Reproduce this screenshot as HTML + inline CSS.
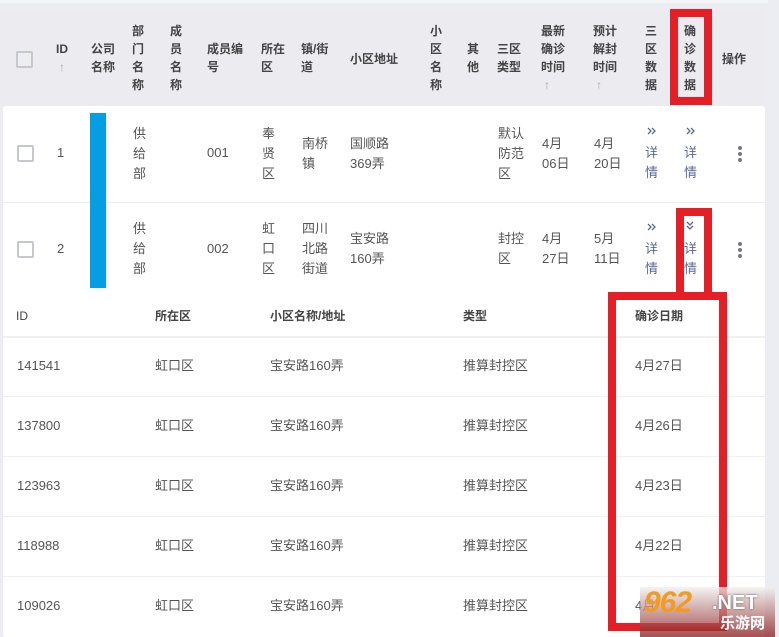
<!DOCTYPE html>
<html><head><meta charset="utf-8"><style>
*{margin:0;padding:0;box-sizing:border-box}
body{width:779px;height:637px;overflow:hidden;background:#ecedf2;font-family:"Liberation Sans","Noto Sans CJK SC",sans-serif;position:relative;color:#555}
.a{position:absolute}
.h{position:absolute;font-size:12px;font-weight:bold;color:#444;line-height:18px}
.t{position:absolute;font-size:13px;color:#555;line-height:20px}
.l{position:absolute;font-size:13px;color:#5b6795;line-height:20px;text-align:center}
.cb{position:absolute;width:17px;height:17px;border:2px solid #c5c8cf;border-radius:2px;background:#fff}
.s{position:absolute;font-size:13px;color:#555;line-height:18px}
.sh{position:absolute;font-size:12px;font-weight:bold;color:#444;line-height:18px}
.dots{position:absolute;width:4px}
.dots i{display:block;width:4px;height:4px;border-radius:2px;background:#778;margin-bottom:2px}
</style></head><body>
<div class="a" style="left:0;top:0;width:768px;height:3px;background:#f5f5f8"></div>
<div class="a" style="left:0;top:10px;width:766px;height:96px;background:#ebebf0"></div>
<div class="a" style="left:3px;top:106px;width:762px;height:531px;background:#fff;border-radius:3px"></div>
<div class="a" style="left:3px;top:202px;width:762px;height:1px;background:#eceef2"></div>
<div class="a" style="left:3px;top:336px;width:762px;height:2px;background:#eef0f4"></div>
<div class="a" style="left:3px;top:396px;width:762px;height:1px;background:#eef0f4"></div>
<div class="a" style="left:3px;top:456px;width:762px;height:1px;background:#eef0f4"></div>
<div class="a" style="left:3px;top:516px;width:762px;height:1px;background:#eef0f4"></div>
<div class="a" style="left:3px;top:576px;width:762px;height:1px;background:#eef0f4"></div>

<!-- header -->
<div class="cb" style="left:16px;top:51px;background:#eeeef2"></div>
<div class="h" style="left:56px;top:40px">ID<br><span style="color:#aaa;font-weight:normal;margin-left:3px">↑</span></div>
<div class="h" style="left:91px;top:40px">公司<br>名称</div>
<div class="h" style="left:132px;top:22px">部<br>门<br>名<br>称</div>
<div class="h" style="left:170px;top:22px">成<br>员<br>名<br>称</div>
<div class="h" style="left:207px;top:40px">成员编<br>号</div>
<div class="h" style="left:261px;top:40px">所在<br>区</div>
<div class="h" style="left:301px;top:40px">镇/街<br>道</div>
<div class="h" style="left:350px;top:50px">小区地址</div>
<div class="h" style="left:430px;top:22px">小<br>区<br>名<br>称</div>
<div class="h" style="left:467px;top:40px">其<br>他</div>
<div class="h" style="left:497px;top:40px">三区<br>类型</div>
<div class="h" style="left:541px;top:22px">最新<br>确诊<br>时间<br><span style="color:#aaa;font-weight:normal;margin-left:3px">↑</span></div>
<div class="h" style="left:593px;top:22px">预计<br>解封<br>时间<br><span style="color:#aaa;font-weight:normal;margin-left:3px">↑</span></div>
<div class="h" style="left:645px;top:22px">三<br>区<br>数<br>据</div>
<div class="h" style="left:684px;top:22px">确<br>诊<br>数<br>据</div>
<div class="h" style="left:722px;top:50px">操作</div>

<div class="a" style="left:90px;top:113px;width:16px;height:175px;background:#049fe3"></div>

<!-- row1 -->
<div class="cb" style="left:17px;top:145px"></div>
<div class="t" style="left:57px;top:143px">1</div>
<div class="t" style="left:133px;top:124px">供<br>给<br>部</div>
<div class="t" style="left:207px;top:143px">001</div>
<div class="t" style="left:262px;top:124px">奉<br>贤<br>区</div>
<div class="t" style="left:302px;top:134px">南桥<br>镇</div>
<div class="t" style="left:350px;top:134px">国顺路<br>369弄</div>
<div class="t" style="left:498px;top:124px">默认<br>防范<br>区</div>
<div class="t" style="left:542px;top:134px">4月<br>06日</div>
<div class="t" style="left:594px;top:134px">4月<br>20日</div>
<svg class="a" style="left:647px;top:127px" width="10" height="8" viewBox="0 0 10 8"><path d="M1 1l3 3-3 3M5 1l3 3-3 3" fill="none" stroke="#5b6795" stroke-width="1.3"/></svg>
<div class="l" style="left:645px;top:143px">详<br>情</div>
<svg class="a" style="left:686px;top:127px" width="10" height="8" viewBox="0 0 10 8"><path d="M1 1l3 3-3 3M5 1l3 3-3 3" fill="none" stroke="#5b6795" stroke-width="1.3"/></svg>
<div class="l" style="left:684px;top:143px">详<br>情</div>
<div class="dots" style="left:738px;top:146px"><i></i><i></i><i></i></div>

<!-- row2 -->
<div class="cb" style="left:17px;top:241px"></div>
<div class="t" style="left:57px;top:239px">2</div>
<div class="t" style="left:133px;top:219px">供<br>给<br>部</div>
<div class="t" style="left:207px;top:239px">002</div>
<div class="t" style="left:262px;top:219px">虹<br>口<br>区</div>
<div class="t" style="left:302px;top:219px">四川<br>北路<br>街道</div>
<div class="t" style="left:350px;top:229px">宝安路<br>160弄</div>
<div class="t" style="left:498px;top:229px">封控<br>区</div>
<div class="t" style="left:542px;top:229px">4月<br>27日</div>
<div class="t" style="left:594px;top:229px">5月<br>11日</div>
<svg class="a" style="left:647px;top:223px" width="10" height="8" viewBox="0 0 10 8"><path d="M1 1l3 3-3 3M5 1l3 3-3 3" fill="none" stroke="#5b6795" stroke-width="1.3"/></svg>
<div class="l" style="left:645px;top:239px">详<br>情</div>
<div class="a" style="left:684px;top:216px;width:20px;height:72px;background:#fff"></div>
<svg class="a" style="left:686px;top:221px" width="8" height="10" viewBox="0 0 8 10"><path d="M1 1l3 3 3-3M1 5l3 3 3-3" fill="none" stroke="#5b6795" stroke-width="1.3"/></svg>
<div class="l" style="left:684px;top:239px">详<br>情</div>
<div class="dots" style="left:738px;top:242px"><i></i><i></i><i></i></div>

<!-- sub table -->
<div class="sh" style="left:16px;top:307px;font-weight:normal;color:#444">ID</div>
<div class="sh" style="left:155px;top:307px">所在区</div>
<div class="sh" style="left:270px;top:307px">小区名称/地址</div>
<div class="sh" style="left:463px;top:307px">类型</div>
<div class="sh" style="left:635px;top:307px">确诊日期</div>

<div class="s" style="left:17px;top:357px">141541</div><div class="s" style="left:155px;top:357px">虹口区</div><div class="s" style="left:270px;top:357px">宝安路160弄</div><div class="s" style="left:463px;top:357px">推算封控区</div><div class="s" style="left:635px;top:357px">4月27日</div>
<div class="s" style="left:17px;top:417px">137800</div><div class="s" style="left:155px;top:417px">虹口区</div><div class="s" style="left:270px;top:417px">宝安路160弄</div><div class="s" style="left:463px;top:417px">推算封控区</div><div class="s" style="left:635px;top:417px">4月26日</div>
<div class="s" style="left:17px;top:477px">123963</div><div class="s" style="left:155px;top:477px">虹口区</div><div class="s" style="left:270px;top:477px">宝安路160弄</div><div class="s" style="left:463px;top:477px">推算封控区</div><div class="s" style="left:635px;top:477px">4月23日</div>
<div class="s" style="left:17px;top:537px">118988</div><div class="s" style="left:155px;top:537px">虹口区</div><div class="s" style="left:270px;top:537px">宝安路160弄</div><div class="s" style="left:463px;top:537px">推算封控区</div><div class="s" style="left:635px;top:537px">4月22日</div>
<div class="s" style="left:17px;top:597px">109026</div><div class="s" style="left:155px;top:597px">虹口区</div><div class="s" style="left:270px;top:597px">宝安路160弄</div><div class="s" style="left:463px;top:597px">推算封控区</div><div class="s" style="left:635px;top:597px">4月</div>

<!-- red boxes -->
<div class="a" style="left:670px;top:9px;width:42px;height:96px;border:8px solid #e61e25"></div>
<div class="a" style="left:676px;top:208px;width:36px;height:86px;border:8px solid #e61e25;border-bottom:none"></div>
<div class="a" style="left:608px;top:292px;width:119px;height:339px;border:8px solid #e61e25"></div>

<!-- watermark -->
<div class="a" style="left:640px;top:587px;width:135px;height:50px;background:linear-gradient(rgba(240,240,240,0.75),rgba(140,30,30,0.75) 95%)"></div>
<div class="a" style="left:644px;top:586px;font:italic bold 30px 'Liberation Sans',sans-serif;color:#f29b1e;letter-spacing:-1px">962</div>
<div class="a" style="left:712px;top:592px;font:bold 20px 'Liberation Sans',sans-serif;color:#fff;text-shadow:0 0 2px #555">.NET</div>
<div class="a" style="left:720px;top:612px;font:bold 15px 'Liberation Sans','Noto Sans CJK SC',sans-serif;color:#fff">乐游网</div>
</body></html>
